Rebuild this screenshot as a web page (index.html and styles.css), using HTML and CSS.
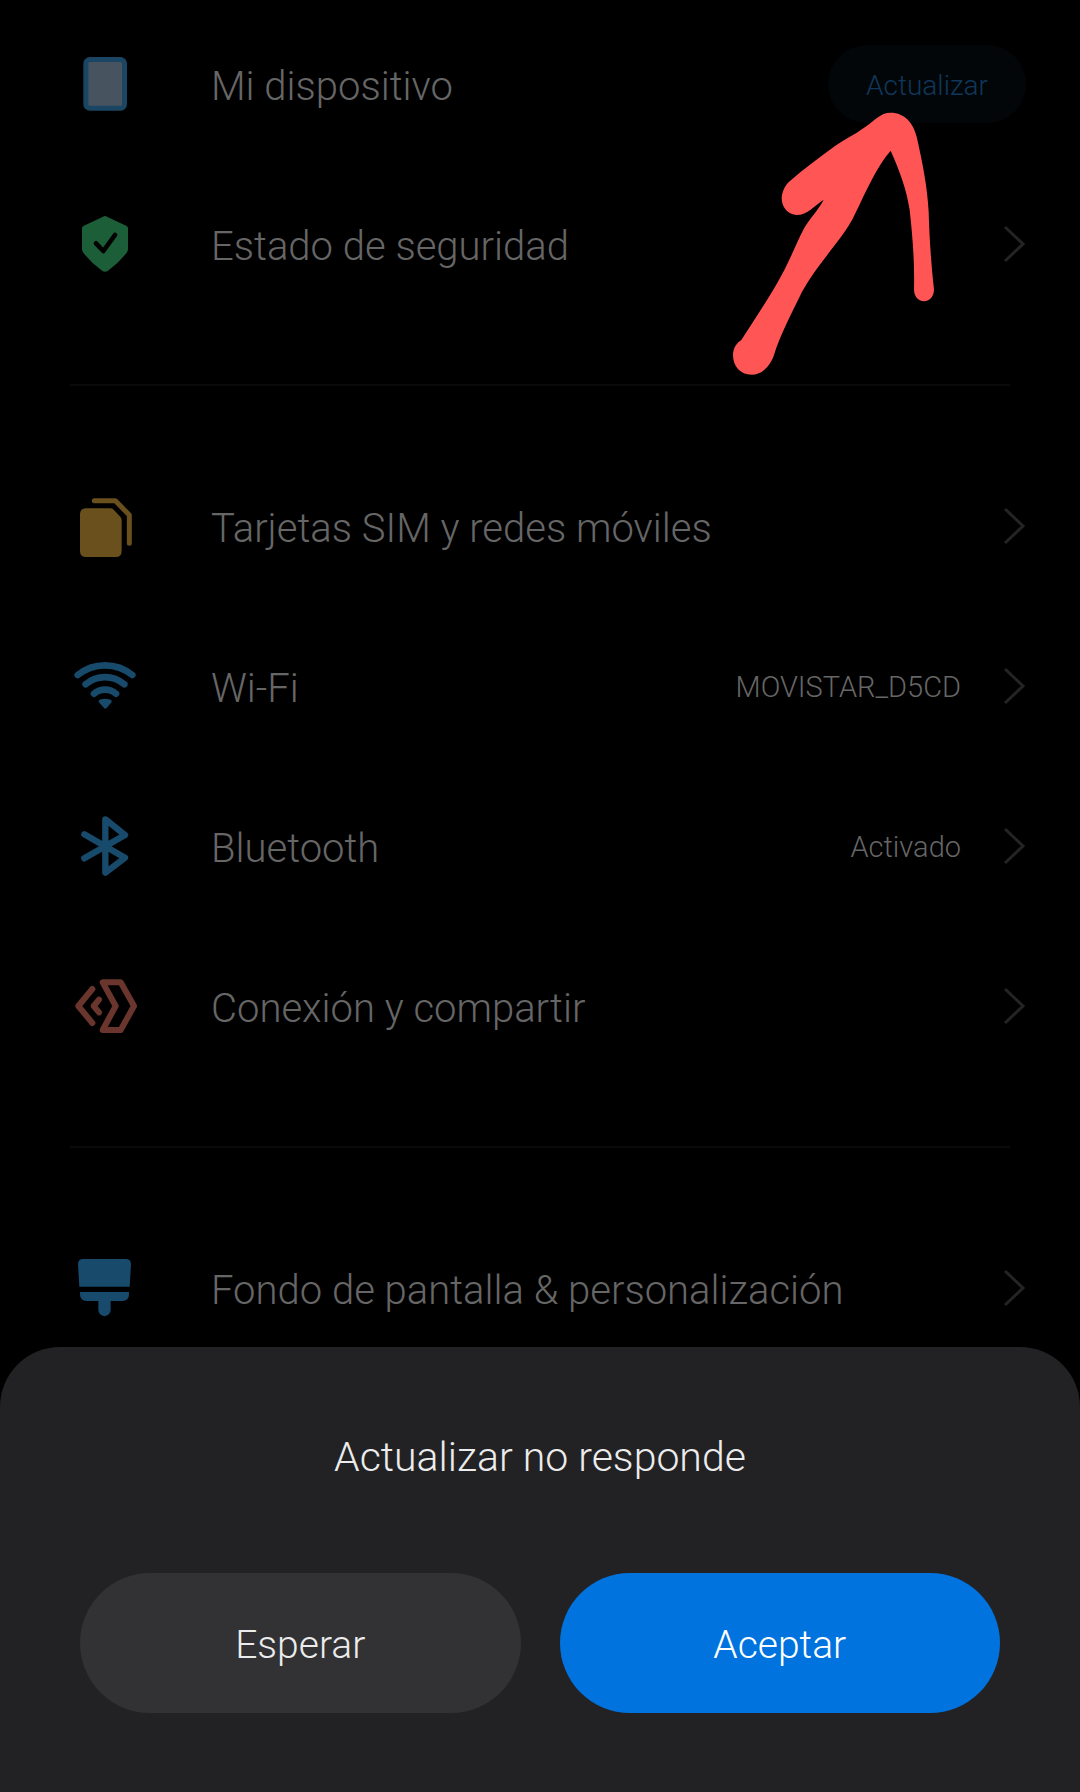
FILE: index.html
```html
<!DOCTYPE html>
<html lang="es">
<head>
    <meta charset="UTF-8">
    <meta name="viewport" content="width=device-width, initial-scale=1.0">
    <title>Ajustes</title>
    <link rel="stylesheet" href="styles.css">
</head>
<body>
    <main class="settings">
        <section class="group">
            <div class="row">
                <svg class="icon" viewBox="0 0 192 192" aria-hidden="true">
                    <rect x="38.5" y="22.5" width="116" height="146" rx="12" fill="#47535f" stroke="#1b4663" stroke-width="15"/>
                </svg>
                <span class="label">Mi dispositivo</span>
                <button class="update" type="button">Actualizar</button>
            </div>
            <a class="row" href="#seguridad">
                <svg class="icon" viewBox="0 0 192 192" aria-hidden="true">
                    <path d="M90 14Q96 10 102 14L161 42Q165 44 165 49V112Q165 119 160 124Q136 154 104 177Q96 182 88 177Q56 154 32 124Q27 119 27 112V49Q27 44 31 42Z" fill="#1b5e38"/>
                    <path d="M69 94L91 117L126 69" fill="none" stroke="#000" stroke-width="14" stroke-linecap="round" stroke-linejoin="round"/>
                </svg>
                <span class="label">Estado de seguridad</span>
                <svg class="chevron" viewBox="0 0 24 40" aria-hidden="true"><path d="M3 3L21 20L3 37"/></svg>
            </a>
        </section>

        <section class="group">
            <a class="row" href="#sim">
                <svg class="icon" viewBox="0 0 192 192" aria-hidden="true">
                    <path d="M39 43H112Q118 43 122 47L142 68Q146 72 146 78V171Q146 189 128 189H39Q21 189 21 171V61Q21 43 39 43Z" fill="#69501d"/>
                    <path d="M64 20H127L169 63V148" fill="none" stroke="#69501d" stroke-width="15" stroke-linecap="round" stroke-linejoin="round"/>
                </svg>
                <span class="label">Tarjetas SIM y redes móviles</span>
                <svg class="chevron" viewBox="0 0 24 40" aria-hidden="true"><path d="M3 3L21 20L3 37"/></svg>
            </a>
            <a class="row" href="#wifi">
                <svg class="icon" viewBox="0 0 192 192" aria-hidden="true">
                    <g fill="none" stroke="#174a6b" stroke-width="20" stroke-linecap="round">
                        <path d="M14 63A130 130 0 0 1 178 63"/>
                        <path d="M38 91A88 88 0 0 1 154 91"/>
                        <path d="M63 119A51 51 0 0 1 129 119"/>
                    </g>
                    <path d="M82 142Q96 136 111 142L97 159Z" fill="#174a6b" stroke="#174a6b" stroke-width="10" stroke-linejoin="round"/>
                </svg>
                <span class="label">Wi-Fi</span>
                <span class="value">MOVISTAR_D5CD</span>
                <svg class="chevron" viewBox="0 0 24 40" aria-hidden="true"><path d="M3 3L21 20L3 37"/></svg>
            </a>
            <a class="row" href="#bluetooth">
                <svg class="icon" viewBox="0 0 192 192" aria-hidden="true">
                    <path d="M34 61L156 131L97 176V16L156 63L34 133" fill="none" stroke="#174a6b" stroke-width="19" stroke-linecap="round" stroke-linejoin="round"/>
                </svg>
                <span class="label">Bluetooth</span>
                <span class="value">Activado</span>
                <svg class="chevron" viewBox="0 0 24 40" aria-hidden="true"><path d="M3 3L21 20L3 37"/></svg>
            </a>
            <a class="row" href="#conexion">
                <svg class="icon" viewBox="0 0 192 192" aria-hidden="true">
                    <g fill="none" stroke="#69352c" stroke-width="18" stroke-linecap="round" stroke-linejoin="round">
                        <path d="M58 45L16 96L58 147"/>
                        <path d="M78 77L62 96L78 115"/>
                        <path d="M89 25H143L183 96L143 168H89L128 96Z"/>
                    </g>
                </svg>
                <span class="label">Conexión y compartir</span>
                <svg class="chevron" viewBox="0 0 24 40" aria-hidden="true"><path d="M3 3L21 20L3 37"/></svg>
            </a>
        </section>

        <section class="group">
            <a class="row" href="#fondo">
                <svg class="icon" viewBox="0 0 192 192" aria-hidden="true">
                    <g fill="#174a6b">
                        <path d="M31 9H158Q174 9 174 25L170 92H19L15 25Q15 9 31 9Z"/>
                        <path d="M21 108H168V115Q168 135 148 135H113V162A18 18 0 0 1 76 162V135H41Q21 135 21 115Z"/>
                    </g>
                </svg>
                <span class="label">Fondo de pantalla &amp; personalización</span>
                <svg class="chevron" viewBox="0 0 24 40" aria-hidden="true"><path d="M3 3L21 20L3 37"/></svg>
            </a>
        </section>

        <!-- hand-drawn arrow pointing at the update button -->
        <svg class="arrow" viewBox="30 240 630 801" aria-hidden="true">
            <path d="M512 248C555 248 580 280 590 320C608 400 622 470 626 545C628 620 634 710 642 778C642 826 582 826 582 778C584 700 578 620 569 540C560 480 540 425 512 362C470 410 440 480 405 552C375 620 300 690 246 785C220 840 180 915 162 975C150 1010 125 1034 95 1034C60 1034 39 1008 39 975C39 955 50 938 64 930C105 865 150 800 185 735C215 680 235 625 255 590C275 558 295 540 311 509C285 525 262 555 230 555C205 555 185 532 185 505C186 485 195 465 210 453C250 418 295 385 345 348C375 328 402 315 430 295C465 272 480 248 512 248Z" fill="#ff5555"/>
        </svg>
    </main>

    <div class="dialog" role="alertdialog" aria-labelledby="dialog-title">
        <h1 class="dialog-title" id="dialog-title">Actualizar no responde</h1>
        <div class="dialog-buttons">
            <button class="btn" type="button">Esperar</button>
            <button class="btn btn-primary" type="button">Aceptar</button>
        </div>
    </div>
</body>
</html>
```
FILE: styles.css
```css
* {
    box-sizing: border-box;
}

body {
    margin: 0;
    background-color: #000;
    color: #666;
    font-family: Roboto, "Noto Sans", sans-serif;
    font-weight: 300;
}

.settings {
    position: relative;
    padding-top: 4px;
}

.group + .group::before {
    content: "";
    display: block;
    height: 2px;
    margin: 60px 70px;
    background-color: #0a0a0a;
}

.row {
    display: flex;
    align-items: center;
    height: 160px;
    padding: 0 54px 0 73px;
    color: inherit;
    text-decoration: none;
}

.icon {
    flex: none;
    width: 64px;
    height: 64px;
    margin-right: 74px;
}

.label {
    flex: 1;
    padding-top: 6px;
    font-size: 40px;
    line-height: 48px;
}

.value {
    padding-top: 2px;
    font-size: 29px;
    line-height: 36px;
}

.chevron {
    flex: none;
    width: 24px;
    height: 40px;
    margin-left: 41px;
    fill: none;
    stroke: #242424;
    stroke-width: 3;
}

.update {
    height: 78px;
    padding: 2px 38px 0;
    border: none;
    border-radius: 39px;
    background-color: #020609;
    color: #10375a;
    font-family: inherit;
    font-size: 28px;
    font-weight: 300;
    cursor: pointer;
}

.arrow {
    position: absolute;
    top: 110px;
    right: 140px;
    width: 210px;
    height: 267px;
    pointer-events: none;
}

.dialog {
    position: fixed;
    right: 0;
    bottom: 0;
    left: 0;
    padding: 86px 80px 79px;
    border-radius: 60px 60px 0 0;
    background-color: #222224;
    color: #ececec;
    text-align: center;
}

.dialog-title {
    margin: 0 0 92px;
    font-size: 41px;
    font-weight: 300;
    line-height: 48px;
}

.dialog-buttons {
    display: flex;
    gap: 39px;
}

.btn {
    flex: 1;
    height: 140px;
    padding: 3px 0 0;
    border: none;
    border-radius: 70px;
    background-color: #323234;
    color: #ececec;
    font-family: inherit;
    font-size: 39px;
    font-weight: 300;
    cursor: pointer;
}

.btn-primary {
    background-color: #0073de;
    color: #fff;
}
```
